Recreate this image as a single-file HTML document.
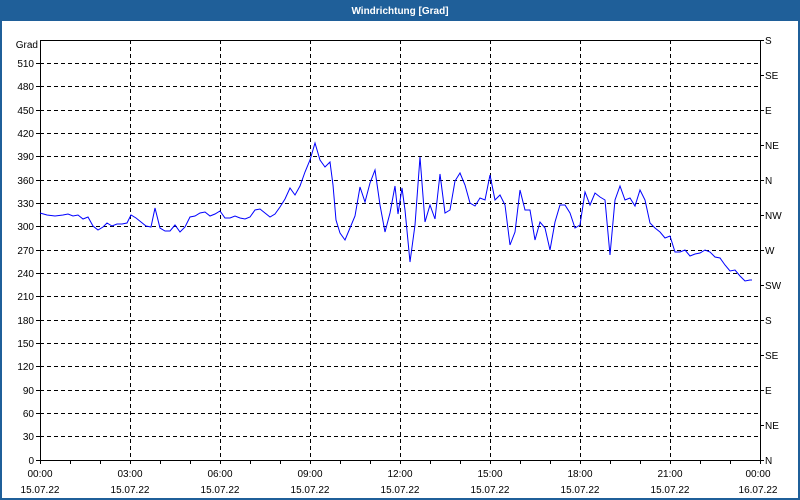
<!DOCTYPE html>
<html><head><meta charset="utf-8"><style>
html,body{margin:0;padding:0;width:800px;height:500px;overflow:hidden;background:#fff}
svg text{font-family:"Liberation Sans",sans-serif;font-size:10px;fill:#000}
</style></head><body>
<svg width="800" height="500" xmlns="http://www.w3.org/2000/svg">
<rect x="0" y="0" width="800" height="500" fill="#1f5f99"/>
<rect x="2" y="21" width="796" height="477" fill="#fff"/>
<text x="400" y="14" text-anchor="middle" style="fill:#fff;font-weight:bold;font-size:10px">Windrichtung [Grad]</text>
<g stroke="#000" stroke-width="1" stroke-dasharray="4,3" fill="none">
<path d="M40 63.5H760M40 86.5H760M40 110.5H760M40 133.5H760M40 156.5H760M40 180.5H760M40 203.5H760M40 226.5H760M40 250.5H760M40 273.5H760M40 296.5H760M40 320.5H760M40 343.5H760M40 366.5H760M40 390.5H760M40 413.5H760M40 436.5H760"/>
<path d="M130.5 40V460M220.5 40V460M310.5 40V460M400.5 40V460M490.5 40V460M580.5 40V460M670.5 40V460"/>
</g>
<rect x="40.5" y="40.5" width="720" height="420" fill="none" stroke="#000"/>
<g stroke="#000">
<path d="M36 63.5H40M36 86.5H40M36 110.5H40M36 133.5H40M36 156.5H40M36 180.5H40M36 203.5H40M36 226.5H40M36 250.5H40M36 273.5H40M36 296.5H40M36 320.5H40M36 343.5H40M36 366.5H40M36 390.5H40M36 413.5H40M36 436.5H40M36 460.5H40"/>
<path d="M760 40.5h4M760 75.5h4M760 110.5h4M760 145.5h4M760 180.5h4M760 215.5h4M760 250.5h4M760 285.5h4M760 320.5h4M760 355.5h4M760 390.5h4M760 425.5h4M760 460.5h4"/>
<path d="M70.5 460v4M100.5 460v4M130.5 460v4M160.5 460v4M190.5 460v4M220.5 460v4M250.5 460v4M280.5 460v4M310.5 460v4M340.5 460v4M370.5 460v4M400.5 460v4M430.5 460v4M460.5 460v4M490.5 460v4M520.5 460v4M550.5 460v4M580.5 460v4M610.5 460v4M640.5 460v4M670.5 460v4M700.5 460v4M730.5 460v4M760.5 460v4M40.5 460v4"/>
</g>
<g text-anchor="end">
<text x="38" y="48">Grad</text>
<text x="34" y="67">510</text><text x="34" y="90">480</text><text x="34" y="114">450</text><text x="34" y="137">420</text><text x="34" y="160">390</text><text x="34" y="184">360</text><text x="34" y="207">330</text><text x="34" y="230">300</text><text x="34" y="254">270</text><text x="34" y="277">240</text><text x="34" y="300">210</text><text x="34" y="324">180</text><text x="34" y="347">150</text><text x="34" y="370">120</text><text x="34" y="394">90</text><text x="34" y="417">60</text><text x="34" y="440">30</text><text x="34" y="464">0</text>
</g>
<g>
<text x="765" y="44">S</text><text x="765" y="79">SE</text><text x="765" y="114">E</text><text x="765" y="149">NE</text><text x="765" y="184">N</text><text x="765" y="219">NW</text><text x="765" y="254">W</text><text x="765" y="289">SW</text><text x="765" y="324">S</text><text x="765" y="359">SE</text><text x="765" y="394">E</text><text x="765" y="429">NE</text><text x="765" y="464">N</text>
</g>
<g text-anchor="middle">
<text x="40" y="477">00:00</text><text x="40" y="493">15.07.22</text>
<text x="130" y="477">03:00</text><text x="130" y="493">15.07.22</text>
<text x="220" y="477">06:00</text><text x="220" y="493">15.07.22</text>
<text x="310" y="477">09:00</text><text x="310" y="493">15.07.22</text>
<text x="400" y="477">12:00</text><text x="400" y="493">15.07.22</text>
<text x="490" y="477">15:00</text><text x="490" y="493">15.07.22</text>
<text x="580" y="477">18:00</text><text x="580" y="493">15.07.22</text>
<text x="670" y="477">21:00</text><text x="670" y="493">15.07.22</text>
<text x="758" y="477">00:00</text><text x="758" y="493">16.07.22</text>
</g>
<polyline fill="none" stroke="#0000ff" stroke-width="1" points="40,213 47,215 55,216 63,215 68,214 73,216 78,215 83,219 88,217 93,226 98,230 103,227 107,223 112,226 117,224 122,224 127,223 131,215 136,218 141,222 146,226 151,227 155,208 160,228 165,231 170,231 175,225 180,232 185,227 190,217 195,216 200,213 205,212 210,216 215,214 220,211 225,218 230,218 235,216 240,218 245,219 250,217 255,210 260,209 265,213 270,217 275,214 280,207 285,199 290,188 295,195 300,186 305,172 310,160 315,143 320,160 325,167 330,162 333,185 336,220 340,233 345,240 350,228 355,216 360,187 365,202 370,183 375,170 380,205 385,232 390,213 395,186 398,214 402,188 405,210 410,262 415,225 420,157 425,222 430,205 435,219 440,174 445,213 450,210 455,181 460,173 465,185 470,203 475,206 480,198 485,200 490,175 495,200 500,195 505,205 510,245 515,232 520,190 525,210 530,210 535,240 540,222 545,228 550,250 555,222 560,205 565,205 570,213 575,228 580,225 585,192 590,205 595,193 600,197 605,200 610,255 615,200 620,186 625,200 630,198 635,206 640,190 645,200 650,223 655,228 660,232 665,238 670,236 675,252 680,252 685,250 690,256 695,254 700,253 705,250 710,252 715,257 720,258 725,265 730,271 735,270 740,276 745,281 750,280 752,280"/>
</svg>
</body></html>
